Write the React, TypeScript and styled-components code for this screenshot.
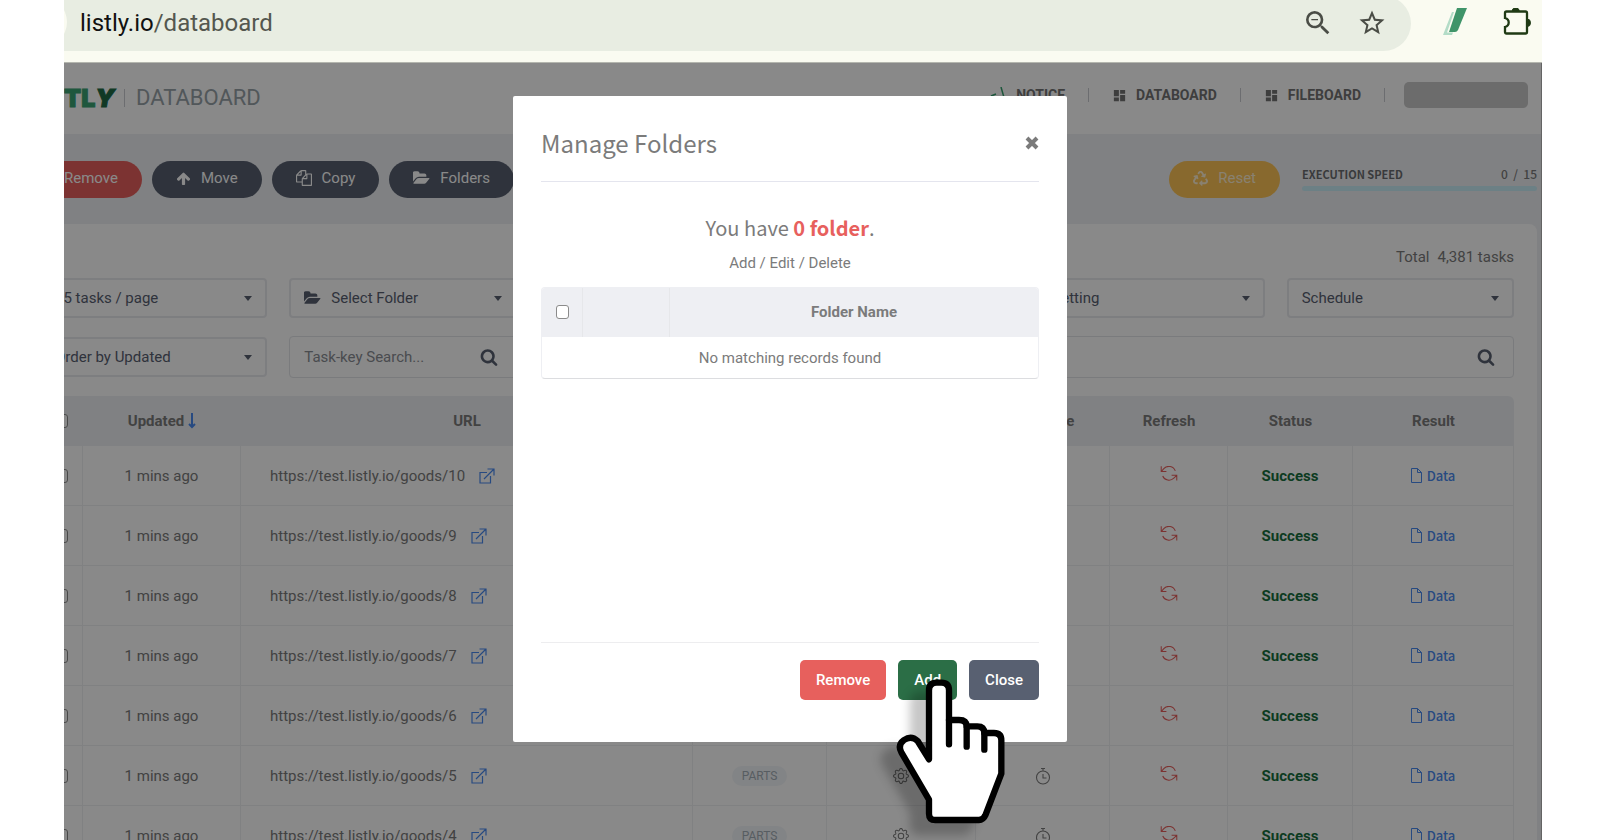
import React from "react";
import styled, { createGlobalStyle, css } from "styled-components";
import { MdDashboard, MdStarBorder, MdZoomOut } from "react-icons/md";
import { FaRecycle, FaTrashAlt } from "react-icons/fa";
import { BsGear } from "react-icons/bs";

const roboto = `Roboto, "Liberation Sans", sans-serif`;
const noto = `"Noto Sans CJK KR", "Noto Sans", sans-serif`;

const color = {
  slate: "#586071",
  red: "#e7605d",
  green: "#2b6e46",
  yellow: "#fdc456",
  text: "#7b7b7b",
  panel: "#eeeff3",
  link: "#4a8af0",
};

const GlobalStyle = createGlobalStyle`
  *, *::before, *::after { box-sizing: border-box; }
  body { margin: 0; background: #fff; font-family: ${roboto}; font-size: 15px; line-height: 20px; color: ${color.text}; }
  button, input, select { font: inherit; color: inherit; margin: 0; }
  svg { display: block; flex: none; }
`;

const Frame = styled.div`
  display: flex;
  flex-direction: column;
  height: 100vh;
  margin: 0 58px 0 64px;
  overflow: hidden;
`;

/* browser bar */

const BrowserBar = styled.div`
  flex: none;
  display: flex;
  align-items: flex-start;
  height: 63px;
  padding-right: 11px;
  background: #fafbf1;
  border-bottom: 1px solid #b4b6ae;
`;

const AddressBar = styled.div`
  position: relative;
  flex: 1;
  display: flex;
  align-items: center;
  gap: 23px;
  height: 55px;
  margin-top: -4px;
  padding: 0 24px 2px 16px;
  border-radius: 0 28px 28px 0;
  background: #e8ede2;
  color: #4a4d46;
  &::before {
    content: "";
    position: absolute;
    left: -47px;
    top: 1px;
    width: 50px;
    height: 50px;
    border-radius: 50%;
    background: #fafbf1;
  }
`;

const Address = styled.span`
  flex: 1;
  font-size: 24px;
  line-height: 32px;
  color: #54574f;
  b { font-weight: 400; color: #111; }
`;

const Extensions = styled.div`
  display: flex;
  align-items: center;
  gap: 36px;
  height: 44px;
  padding-left: 32px;
`;

/* page */

const Viewport = styled.div`
  position: relative;
  flex: 1;
  min-height: 0;
  border-right: 1px solid #bbb;
`;

const Page = styled.div`
  margin-left: -48px;
  height: 100%;
  overflow: hidden;
  padding-right: 4px;
  background: #eff1f4;
`;

const Header = styled.header`
  display: flex;
  align-items: center;
  justify-content: space-between;
  height: 71px;
  margin-right: -4px;
  padding: 0 13px 0 48px;
  background: #fff;
`;

const Brand = styled.div`
  display: flex;
  align-items: center;
  gap: 11px;
  padding-bottom: 2px;
`;

const Logo = styled.span`
  width: 49px;
  font: 900 25px/28px Inter, sans-serif;
  color: #3ba272;
  -webkit-text-stroke: 1px #3ba272;
  i {
    color: #1e6b46;
    -webkit-text-stroke: 1px #1e6b46;
  }
`;

const Separator = styled.span<{ $tall?: boolean }>`
  width: 1px;
  height: ${(p) => (p.$tall ? 18 : 14)}px;
  background: #c9cbd0;
`;

const Section = styled.span`
  font-size: 22px;
  line-height: 28px;
  color: #98a2a8;
`;

const Nav = styled.nav`
  display: flex;
  align-items: center;
  height: 100%;
  padding-bottom: 7px;
`;

const NavLink = styled.a`
  display: flex;
  align-items: center;
  gap: 9px;
  margin: 0 23px;
  color: #747474;
  font-size: 14px;
  font-weight: 700;
  text-decoration: none;
`;

const Account = styled.span`
  width: 124px;
  height: 26px;
  margin-left: 19px;
  border-radius: 5px;
  background: #c9c9c9;
`;

const Toolbar = styled.div`
  display: flex;
  align-items: center;
  justify-content: space-between;
  height: 90px;
`;

const Actions = styled.div`
  display: flex;
  align-items: center;
  gap: 10px;
`;

const Pill = styled.button<{ $bg: string; $soft?: boolean }>`
  display: flex;
  align-items: center;
  gap: 10px;
  height: 37px;
  padding: 0 24px 2px;
  border: 0;
  border-radius: 19px;
  background: ${(p) => p.$bg};
  color: ${(p) => (p.$soft ? "#fff0d2" : "#fff")};
`;

const Speed = styled.div`
  width: 235px;
  margin-left: 12px;
  padding-bottom: 2px;
  font: 500 12px/16px ${noto};
`;

const SpeedRow = styled.div`
  display: flex;
  justify-content: space-between;
  margin-bottom: 4px;
  white-space: pre;
  b { font-size: 11px; font-weight: 700; color: #6b6d70; }
`;

const SpeedBar = styled.div`
  height: 5px;
  border-radius: 3px;
  background: #c9eef8;
`;

const Card = styled.section`
  padding: 21px 23px 0 24px;
  border-radius: 8px 8px 0 0;
  background: #fff;
`;

const Total = styled.p`
  display: flex;
  justify-content: flex-end;
  gap: 8px;
  margin: 0 0 9px;
  line-height: 24px;
`;

const Filters = styled.div`
  display: grid;
  grid-template-columns: repeat(6, minmax(0, 1fr));
  gap: 18px 22px;
  align-items: center;
  margin-bottom: 18px;
`;

const field = css`
  display: flex;
  align-items: center;
  border: 1px solid #e3e5e9;
  border-radius: 4px;
  color: ${color.slate};
`;

const SelectBox = styled.div`
  ${field}
  gap: 10px;
  height: 40px;
  border-width: 2px;
  border-color: #e9ebef;
  padding: 0 13px;
  select {
    flex: 1;
    min-width: 0;
    padding: 0;
    border: 0;
    background: none;
    appearance: none;
    outline: 0;
  }
  &::after {
    content: "";
    border: 4px solid transparent;
    border-top: 5px solid ${color.slate};
    border-bottom: 0;
  }
`;

const SearchBox = styled.div<{ $wide?: boolean }>`
  ${field}
  height: 42px;
  padding: 0 18px 0 14px;
  ${(p) => p.$wide && "grid-column: span 4;"}
  input {
    flex: 1;
    min-width: 0;
    padding: 0;
    border: 0;
    outline: 0;
    background: none;
    &::placeholder { color: #8a8d94; opacity: 1; }
  }
  button { padding: 0; border: 0; background: none; }
`;

const TaskTable = styled.table`
  width: 100%;
  table-layout: fixed;
  border-collapse: separate;
  border-spacing: 0;
  th {
    height: 50px;
    padding: 0;
    background: #eff1f4;
    font-weight: 700;
    &:first-child { border-radius: 6px 0 0 0; }
    &:last-child { border-radius: 0 6px 0 0; }
  }
  td {
    height: 60px;
    padding: 0;
    text-align: center;
    border-right: 1px solid #eff1f3;
    border-bottom: 1px solid #eff1f3;
  }
`;

const Inline = styled.span`
  display: flex;
  align-items: center;
  justify-content: center;
  gap: 4px;
`;

const UrlCell = styled.td`
  && { padding-left: 29px; }
`;

const UrlLine = styled.span`
  display: flex;
  align-items: center;
  gap: 14px;
  a { color: ${color.link}; }
`;

const Tag = styled.span`
  display: inline-block;
  padding: 0 10px;
  border-radius: 10px;
  background: #f3f6f9;
  color: #a3adb6;
  font-size: 12px;
`;

const Success = styled.b`
  color: #18703e;
`;

const DataLink = styled.a`
  display: flex;
  align-items: center;
  justify-content: center;
  gap: 5px;
  color: ${color.link};
  font-family: ${noto};
  font-size: 13px;
  font-weight: 500;
  text-decoration: none;
`;

const IconButton = styled.button`
  display: flex;
  margin: 0 auto;
  padding: 0;
  border: 0;
  background: none;
`;

const Check = styled.input`
  appearance: none;
  display: block;
  width: 13px;
  height: 14px;
  margin: 0 auto !important;
  border: 1px solid #8b8b8b;
  border-radius: 3px;
  background: #fff;
`;

/* dialog */

const Overlay = styled.div`
  position: absolute;
  inset: 0 -1px 0 0;
  display: flex;
  justify-content: center;
  align-items: flex-start;
  padding: 33px 26px 0 0;
  background: rgba(0, 0, 0, 0.463);
`;

const Dialog = styled.div`
  display: flex;
  flex-direction: column;
  width: 554px;
  min-height: 646px;
  padding: 0 28px 42px;
  border-radius: 2px;
  background: #fff;
`;

const DialogHead = styled.div`
  display: flex;
  align-items: center;
  justify-content: space-between;
  height: 86px;
  padding-top: 9px;
  border-bottom: 1px solid #e4e5ee;
  h2 { margin: 0; font: 400 24px/36px ${noto}; }
  button { padding: 0; border: 0; background: none; }
`;

const Count = styled.p`
  margin: 32px 0 9px;
  text-align: center;
  font: 400 20px/28px ${noto};
  b { color: ${color.red}; }
`;

const Hint = styled.p`
  margin: 0 0 12px;
  line-height: 24px;
  text-align: center;
`;

const FolderTable = styled.table`
  width: 100%;
  table-layout: fixed;
  border-collapse: separate;
  border-spacing: 0;
  border: 1px solid #eeeff3;
  border-bottom-color: #dcdde0;
  border-radius: 4px;
  overflow: hidden;
  th {
    height: 49px;
    padding: 0 0 2px;
    background: ${color.panel};
    font-weight: 700;
    & + th { border-left: 1px solid #e6e7ea; }
  }
  td { height: 41px; padding: 0; text-align: center; }
`;

const DialogFoot = styled.div`
  display: flex;
  justify-content: flex-end;
  gap: 12px;
  margin-top: auto;
  padding-top: 17px;
  border-top: 1px solid #ededef;
`;

const Button = styled.button<{ $bg: string }>`
  height: 40px;
  padding: 0 16px;
  border: 0;
  border-radius: 5px;
  background: ${(p) => p.$bg};
  color: #fff;
  font-weight: 500;
`;

const CursorAnchor = styled.div`
  position: relative;
`;

const Cursor = styled.svg`
  position: absolute;
  left: -4px;
  top: 17px;
  width: 113px;
  height: 150px;
  overflow: visible;
  pointer-events: none;
  filter: drop-shadow(-16px 12px 5px rgba(0, 0, 0, 0.22));
`;

/* icons */

const Glyph = ({ d, w = 1792, size }: { d: string; w?: number; size: number }) => (
  <svg viewBox={`0 0 ${w} 1792`} width={Math.round((size * w) / 1792)} height={size} fill="currentColor" aria-hidden>
    <path d={d} />
  </svg>
);

const ArrowUp = () => (
  <Glyph size={15} d="M1675 971q0 51-37 90l-75 75q-38 38-91 38-54 0-90-38l-294-293v704q0 52-37.5 84.5t-90.5 32.5h-128q-53 0-90.5-32.5t-37.5-84.5v-704l-294 293q-36 38-90 38t-90-38l-75-75q-38-38-38-90 0-53 38-91l651-651q35-37 90-37 54 0 91 37l651 651q37 39 37 91z" />
);
const Files = () => (
  <Glyph size={16} d="M1696 384q40 0 68 28t28 68v1216q0 40-28 68t-68 28h-960q-40 0-68-28t-28-68v-288h-544q-40 0-68-28t-28-68v-672q0-40 20-88t48-76l408-408q28-28 76-48t88-20h416q40 0 68 28t28 68v328q68-40 128-40h416zm-544 213l-299 299h299v-299zm-640-384l-299 299h299v-299zm196 647l316-316v-416h-384v416q0 40-28 68t-68 28h-416v640h512v-256q0-40 20-88t48-76zm956 804v-1152h-384v416q0 40-28 68t-68 28h-416v640h896z" />
);
const FolderOpen = () => (
  <Glyph size={16} w={1856} d="M1815 952q0 31-31 66l-336 396q-43 51-120.500 86.500t-143.500 35.500h-1088q-34 0-60.500-13t-26.500-43q0-31 31-66l336-396q43-51 120.500-86.500t143.500-35.500h1088q34 0 60.500 13t26.500 43zm-343-344v160h-832q-94 0-197 47.500t-164 119.500l-337 396-5 6q0-4-.5-12.500t-.5-12.500v-960q0-92 66-158t158-66h320q92 0 158 66t66 158v32h544q92 0 158 66t66 158z" />
);
const Search = () => (
  <Glyph size={18} d="M1216 832q0-185-131.500-316.500t-316.500-131.500-316.500 131.500-131.500 316.500 131.500 316.500 316.500 131.500 316.500-131.500 131.500-316.500zm512 832q0 52-38 90t-90 38q-54 0-90-38l-343-342q-179 124-399 124-143 0-273.500-55.500t-225-150-150-225-55.500-273.500 55.500-273.500 150-225 225-150 273.500-55.500 273.500 55.500 225 150 150 225 55.500 273.500q0 220-124 399l343 343q37 37 37 90z" />
);

const Line = ({ d, w, h, vb, sw = 1, stroke = "currentColor" }: { d: string; w: number; h: number; vb?: string; sw?: number; stroke?: string }) => (
  <svg width={w} height={h} viewBox={vb ?? `0 0 ${w} ${h}`} fill="none" stroke={stroke} strokeWidth={sw} aria-hidden>
    <path d={d} />
  </svg>
);

const SortDown = () => <Line w={8} h={16} sw={2} stroke={color.link} d="M4 0v14M1 11l3 3 3-3" />;
const OpenLink = () => <Line w={16} h={16} sw={1.2} d="M8 4.500H1v10.500h10.500V8M5 11 15 1M8.500 1H15v6.500" />;
const FileIcon = () => <Line w={11} h={15} sw={1} d="M.5.5h6l4 4v10H.5zM6.500.5v4h4" />;
const Refresh = () => (
  <Line w={18} h={20} vb="0 2 24 27" sw={1.4} stroke={color.red} d="M1.500 2.500v7h7M22.500 21.500v-7h-7M20.490 8.500A9.200 9.200 0 0 0 5 5.640L1.500 9.500m21 5-4 4A9.200 9.200 0 0 1 3.510 15.500" />
);
const Stopwatch = () => (
  <Line w={16} h={18} sw={1.1} d="M8 4a6.500 6.500 0 1 1 0 13a6.500 6.500 0 1 1 0-13zM8 4V1.500M6 1.500h4M8 7v4h3.500" />
);
const Megaphone = () => <Line w={17} h={17} sw={1.5} stroke="#35a06f" d="M11 0l4 14M1 9l5-2M1 9l2 5 12 0" />;
const Slashes = () => (
  <svg width="24" height="28" viewBox="0 0 24 28" aria-hidden>
    <path d="M9 4h2L4 24.500h6l-1 2.500H0z" fill="#b3dcc7" />
    <path d="M14 0h10l-9 22q-1 2-3 2H6z" fill="#3f9469" />
  </svg>
);
const Puzzle = () => (
  <svg width="28" height="28" viewBox="0 1 28 28" aria-hidden>
    <path d="M9 4.500a3.700 3.500 0 0 1 7.400 0zM24 12a3.500 3.800 0 0 1 0 7.600z" fill="#1f3a14" stroke="#1f3a14" />
    <path d="M3.500 4.500h19q1.500 0 1.500 1.500v19q0 1.500-1.500 1.500h-19q-1.500 0-1.500-1.500v-5q3.700-1 3.700-4.500t-3.700-4.500V6q0-1.500 1.500-1.500z" fill="none" stroke="#1f3a14" strokeWidth="2.300" />
  </svg>
);

const Hand = () => (
  <Cursor viewBox="640 170 339 450" aria-hidden>
    <g stroke="#000" strokeWidth="19" strokeLinecap="round" strokeLinejoin="round">
      <path
        fill="#fff"
        d="M745 417V210Q745 187 768 187H782Q805 187 805 210V299H835Q858 299 858 318H890Q911 318 911 338H940Q962 338 962 360V460L914 585Q908 599 895 599H764Q745 599 745 580V538L662 396Q650 374 670 359Q692 344 711 362Z"
      />
      <path fill="none" d="M805 299V372M858 318V379M911 338V388" />
    </g>
  </Cursor>
);

const tasks = [10, 9, 8, 7, 6, 5, 4];

export default function App() {
  return (
    <>
      <GlobalStyle />
      <Frame>
        <BrowserBar>
          <AddressBar>
            <Address>
              <b>listly.io</b>/databoard
            </Address>
            <MdZoomOut size={32} />
            <MdStarBorder size={30} />
          </AddressBar>
          <Extensions>
            <Slashes />
            <Puzzle />
          </Extensions>
        </BrowserBar>

        <Viewport>
          <Page>
            <Header>
              <Brand>
                <Logo>
                  TL<i>Y</i>
                </Logo>
                <Separator $tall />
                <Section>DATABOARD</Section>
              </Brand>
              <Nav>
                <NavLink href="#notice"><Megaphone />NOTICE</NavLink>
                <Separator />
                <NavLink href="#databoard"><MdDashboard size={15} />DATABOARD</NavLink>
                <Separator />
                <NavLink href="#fileboard"><MdDashboard size={15} />FILEBOARD</NavLink>
                <Separator />
                <Account />
              </Nav>
            </Header>

            <Toolbar>
              <Actions>
                <Pill $bg={color.red}><FaTrashAlt size={14} />Remove</Pill>
                <Pill $bg={color.slate}><ArrowUp />Move</Pill>
                <Pill $bg={color.slate}><Files />Copy</Pill>
                <Pill $bg={color.slate}><FolderOpen />Folders</Pill>
              </Actions>
              <Actions>
                <Pill $bg={color.yellow} $soft><FaRecycle size={15} />Reset</Pill>
                <Speed>
                  <SpeedRow>
                    <b>EXECUTION SPEED</b>
                    <span>{"0  /  15"}</span>
                  </SpeedRow>
                  <SpeedBar />
                </Speed>
              </Actions>
            </Toolbar>

            <Card>
              <Total><span>Total</span><span>4,381 tasks</span></Total>
              <Filters>
                <SelectBox><select aria-label="Tasks per page"><option>25 tasks / page</option></select></SelectBox>
                <SelectBox><FolderOpen /><select aria-label="Folder"><option>Select Folder</option></select></SelectBox>
                <SelectBox><select aria-label="Group"><option>Group</option></select></SelectBox>
                <SelectBox><select aria-label="Status"><option>Status</option></select></SelectBox>
                <SelectBox><select aria-label="Setting"><option>Setting</option></select></SelectBox>
                <SelectBox><select aria-label="Schedule"><option>Schedule</option></select></SelectBox>
                <SelectBox><select aria-label="Order"><option>Order by Updated</option></select></SelectBox>
                <SearchBox>
                  <input aria-label="Task key" placeholder="Task-key Search..." />
                  <button aria-label="Search task key"><Search /></button>
                </SearchBox>
                <SearchBox $wide>
                  <input aria-label="Keyword" />
                  <button aria-label="Search keyword"><Search /></button>
                </SearchBox>
              </Filters>

              <TaskTable>
                <colgroup>
                  <col width="43" /><col width="158" /><col /><col width="134" /><col width="149" />
                  <col width="134" /><col width="118" /><col width="125" /><col width="161" />
                </colgroup>
                <thead>
                  <tr>
                    <th><Check type="checkbox" aria-label="Select all tasks" /></th>
                    <th><Inline>Updated<SortDown /></Inline></th>
                    <th>URL</th>
                    <th>Type</th>
                    <th>Setting</th>
                    <th>Schedule</th>
                    <th>Refresh</th>
                    <th>Status</th>
                    <th>Result</th>
                  </tr>
                </thead>
                <tbody>
                  {tasks.map((n) => (
                    <tr key={n}>
                      <td><Check type="checkbox" aria-label={`Select task ${n}`} /></td>
                      <td>1 mins ago</td>
                      <UrlCell>
                        <UrlLine>
                          https://test.listly.io/goods/{n}
                          <a href={`#goods-${n}`} aria-label={`Open goods ${n}`}><OpenLink /></a>
                        </UrlLine>
                      </UrlCell>
                      <td><Tag>PARTS</Tag></td>
                      <td><IconButton aria-label="Setting"><BsGear size={16} /></IconButton></td>
                      <td><IconButton aria-label="Schedule"><Stopwatch /></IconButton></td>
                      <td><IconButton aria-label="Refresh"><Refresh /></IconButton></td>
                      <td><Success>Success</Success></td>
                      <td><DataLink href={`#data-${n}`}><FileIcon />Data</DataLink></td>
                    </tr>
                  ))}
                </tbody>
              </TaskTable>
            </Card>
          </Page>

          <Overlay>
            <Dialog role="dialog" aria-labelledby="folders-title">
              <DialogHead>
                <h2 id="folders-title">Manage Folders</h2>
                <button aria-label="Close dialog">
                  <Line w={14} h={14} sw={4} d="M2 2l10 10M12 2L2 12" />
                </button>
              </DialogHead>
              <Count>You have <b>0 folder</b>.</Count>
              <Hint>Add / Edit / Delete</Hint>
              <FolderTable>
                <colgroup><col width="40" /><col width="87" /><col /></colgroup>
                <thead>
                  <tr>
                    <th><Check type="checkbox" aria-label="Select all folders" /></th>
                    <th />
                    <th>Folder Name</th>
                  </tr>
                </thead>
                <tbody>
                  <tr><td colSpan={3}>No matching records found</td></tr>
                </tbody>
              </FolderTable>
              <DialogFoot>
                <Button $bg={color.red}>Remove</Button>
                <CursorAnchor>
                  <Button $bg={color.green}>Add</Button>
                  <Hand />
                </CursorAnchor>
                <Button $bg={color.slate}>Close</Button>
              </DialogFoot>
            </Dialog>
          </Overlay>
        </Viewport>
      </Frame>
    </>
  );
}
